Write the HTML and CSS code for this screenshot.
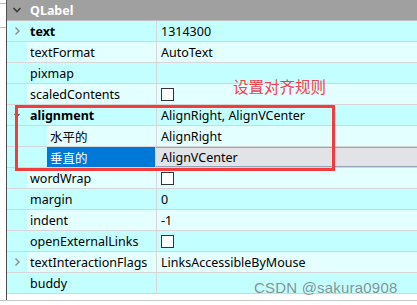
FILE: index.html
```html
<!DOCTYPE html>
<html lang="zh">
<head>
  <meta charset="UTF-8" />
  <title>QLabel properties</title>
  <link rel="stylesheet" href="styles.css">
</head>
<body>

<div class="frame">
  <div class="side"><div class="side-box"></div></div>

  <div class="panel">
    <div class="head">
      <span class="gut"><svg width="10" height="10" viewBox="0 0 10 10"><path d="M1.5 3 L5 6.5 L8.5 3" fill="none" stroke="#3c3c3c" stroke-width="1.6"/></svg></span>
      <span class="head-name">QLabel</span>
    </div>

    <div class="row dark">
      <span class="gut"><svg width="10" height="10" viewBox="0 0 10 10"><path d="M3.5 1.5 L7 5 L3.5 8.5" fill="none" stroke="#8a8a8a" stroke-width="1.4"/></svg></span>
      <span class="name bold">text</span>
      <span class="val">1314300</span>
    </div>
    <div class="row light">
      <span class="gut"></span>
      <span class="name">textFormat</span>
      <span class="val">AutoText</span>
    </div>
    <div class="row dark">
      <span class="gut"></span>
      <span class="name">pixmap</span>
      <span class="val"></span>
    </div>
    <div class="row light">
      <span class="gut"></span>
      <span class="name">scaledContents</span>
      <span class="val"><i class="check"></i></span>
    </div>
    <div class="row dark">
      <span class="gut"><svg width="10" height="10" viewBox="0 0 10 10"><path d="M2.5 4 L5 6.5 L7.5 4" fill="none" stroke="#555" stroke-width="1.3"/></svg></span>
      <span class="name bold">alignment</span>
      <span class="val">AlignRight, AlignVCenter</span>
    </div>
    <div class="row light">
      <span class="gut sub"></span>
      <span class="name">水平的</span>
      <span class="val">AlignRight</span>
    </div>
    <div class="row dark">
      <span class="gut sub"></span>
      <span class="name selected">垂直的</span>
      <span class="val editor">AlignVCenter</span>
    </div>
    <div class="row light">
      <span class="gut"></span>
      <span class="name">wordWrap</span>
      <span class="val"><i class="check"></i></span>
    </div>
    <div class="row dark">
      <span class="gut"></span>
      <span class="name">margin</span>
      <span class="val">0</span>
    </div>
    <div class="row light">
      <span class="gut"></span>
      <span class="name">indent</span>
      <span class="val">-1</span>
    </div>
    <div class="row dark">
      <span class="gut"></span>
      <span class="name">openExternalLinks</span>
      <span class="val"><i class="check"></i></span>
    </div>
    <div class="row light">
      <span class="gut"><svg width="10" height="10" viewBox="0 0 10 10"><path d="M3.5 1.5 L7 5 L3.5 8.5" fill="none" stroke="#8a8a8a" stroke-width="1.4"/></svg></span>
      <span class="name">textInteractionFlags</span>
      <span class="val">LinksAccessibleByMouse</span>
    </div>
    <div class="row dark">
      <span class="gut"></span>
      <span class="name">buddy</span>
      <span class="val"></span>
    </div>
  </div>
</div>

<div class="mark-box"></div>
<div class="mark-text">设置对齐规则</div>
<div class="watermark">CSDN @sakura0908</div>

</body>
</html>
```

FILE: styles.css
```css
body { margin: 0; background: #fff; font-family: "Noto Sans", "Noto Sans CJK SC", sans-serif; font-size: 12.5px; color: #000; width: 417px; height: 305px; overflow: hidden; position: relative; }
.frame { display: flex; height: 300px; border-bottom: 1px solid #c8c8c8; }
.side { width: 6px; border-right: 1px solid #505050; position: relative; }
.side-box { height: 23px; margin-top: 3px; border-top: 1px solid #bbb; border-bottom: 1px solid #bbb; }
.panel { flex: 1; }

.head { display: flex; align-items: center; height: 20px; background: #a0a0a0; border-bottom: 1px solid #c0c0c0; }
.head-name { color: #fff; font-weight: bold; padding-left: 3px; }

.row { display: flex; height: 20px; border-bottom: 1px solid #d6d6d6; }
.row.dark { background: #c4ffff; }
.row.light { background: #e4ffff; }
.gut { width: 20px; flex: none; display: flex; align-items: center; justify-content: center; background: #c4ffff; height: 100%; }
.head .gut { background: transparent; }
.gut.sub { width: 40px; }
.name { flex: 1; display: flex; align-items: center; padding-left: 3px; border-right: 1px solid #d6d6d6; white-space: nowrap; }
.name.bold { font-weight: bold; }
.name.selected { background: #0078d7; color: #fff; }
.val { width: 256px; flex: none; display: flex; align-items: center; padding-left: 4px; white-space: nowrap; }
.val.editor { background: #e1e3e6; border-top: 1px solid #8fa6bd; border-bottom: 1px solid #8fa6bd; height: 18px; margin-top: 0; padding-left: 5px; }

.check { display: block; width: 11px; height: 11px; border: 1px solid #333; background: #fff; }

.mark-box { position: absolute; left: 15px; top: 105px; width: 314px; height: 60px; border: 3px solid #f53b3b; }
.mark-text { position: absolute; left: 233px; top: 75px; font-family: "Noto Sans CJK SC", sans-serif; font-size: 15.5px; color: #f0434f; }
.watermark { position: absolute; left: 254px; top: 279px; font-family: "Liberation Sans", sans-serif; font-size: 15px; color: rgba(110, 110, 110, 0.75); letter-spacing: 0.2px; }
```
